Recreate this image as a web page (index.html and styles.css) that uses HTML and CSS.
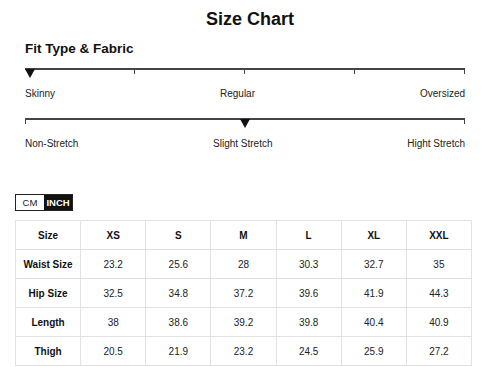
FILE: index.html
```html
<!DOCTYPE html>
<html>
<head>
<meta charset="utf-8">
<link rel="stylesheet" href="styles.css">
</head>
<body>
<div class="page">
  <h1 class="title">Size Chart</h1>
  <div class="fit">
    <h2 class="subtitle">Fit Type &amp; Fabric</h2>
    <div class="scale">
      <div class="seg"></div><div class="seg"></div><div class="seg"></div><div class="seg"></div>
      <span class="marker marker-1"></span>
    </div>
    <div class="labels"><span>Skinny</span><span>Regular</span><span>Oversized</span></div>
    <div class="scale scale-2">
      <div class="seg seg-full"></div>
      <span class="marker marker-2"></span>
    </div>
    <div class="labels"><span>Non-Stretch</span><span>Slight Stretch</span><span>Hight Stretch</span></div>
  </div>
  <div class="chart">
    <div class="toggle"><span class="opt">CM</span><span class="opt active">INCH</span></div>
    <table class="sizes">
      <tr><th>Size</th><th>XS</th><th>S</th><th>M</th><th>L</th><th>XL</th><th>XXL</th></tr>
      <tr><th>Waist Size</th><td>23.2</td><td>25.6</td><td>28</td><td>30.3</td><td>32.7</td><td>35</td></tr>
      <tr><th>Hip Size</th><td>32.5</td><td>34.8</td><td>37.2</td><td>39.6</td><td>41.9</td><td>44.3</td></tr>
      <tr><th>Length</th><td>38</td><td>38.6</td><td>39.2</td><td>39.8</td><td>40.4</td><td>40.9</td></tr>
      <tr><th>Thigh</th><td>20.5</td><td>21.9</td><td>23.2</td><td>24.5</td><td>25.9</td><td>27.2</td></tr>
    </table>
  </div>
</div>
</body>
</html>
```
FILE: styles.css
```css
html, body {
  margin: 0;
  padding: 0;
  background: #fff;
}
body {
  font-family: "Liberation Sans", Arial, sans-serif;
  color: #1a1a1a;
}
.page {
  width: 500px;
  height: 367px;
  overflow: hidden;
}
.title {
  margin: 8px 0 0;
  font-size: 18px;
  line-height: 22px;
  font-weight: bold;
  text-align: center;
  color: #111;
}
.fit {
  padding: 0 35px 0 25px;
}
.subtitle {
  margin: 11px 0 0;
  font-size: 13.5px;
  line-height: 16px;
  font-weight: bold;
  color: #111;
}
.scale {
  position: relative;
  display: flex;
  margin-top: 11px;
  height: 6px;
}
.scale-2 {
  margin-top: 18px;
}
.seg {
  flex: 1;
  border-top: 2px solid #444;
  border-right: 1.5px solid #444;
}
.seg-full {
  border-left: 1.5px solid #444;
}
.marker {
  position: absolute;
  top: 1px;
  width: 0;
  height: 0;
  border-left: 5px solid transparent;
  border-right: 5px solid transparent;
  border-top: 9px solid #111;
}
.marker-1 {
  left: 0;
}
.marker-2 {
  left: 215px;
}
.labels {
  display: flex;
  justify-content: space-between;
  margin-top: 14px;
  font-size: 10px;
  line-height: 12px;
  color: #222;
}
.chart {
  padding: 0 28px 0 15px;
  margin-top: 44px;
}
.toggle {
  display: flex;
  width: 58px;
  height: 17px;
  box-sizing: border-box;
  border: 1px solid #222;
  font-size: 9.5px;
  line-height: 15px;
}
.opt {
  flex: 1;
  text-align: center;
  color: #222;
}
.opt.active {
  background: #111;
  color: #fff;
  font-weight: bold;
}
.sizes {
  margin-top: 9px;
  width: 457px;
  border-collapse: collapse;
  table-layout: fixed;
  font-size: 10px;
  color: #222;
}
.sizes th, .sizes td {
  border: 1px solid #e2e2e2;
  height: 28px;
  padding: 0;
  text-align: center;
  vertical-align: middle;
}
.sizes th {
  font-weight: bold;
  color: #111;
}
```
